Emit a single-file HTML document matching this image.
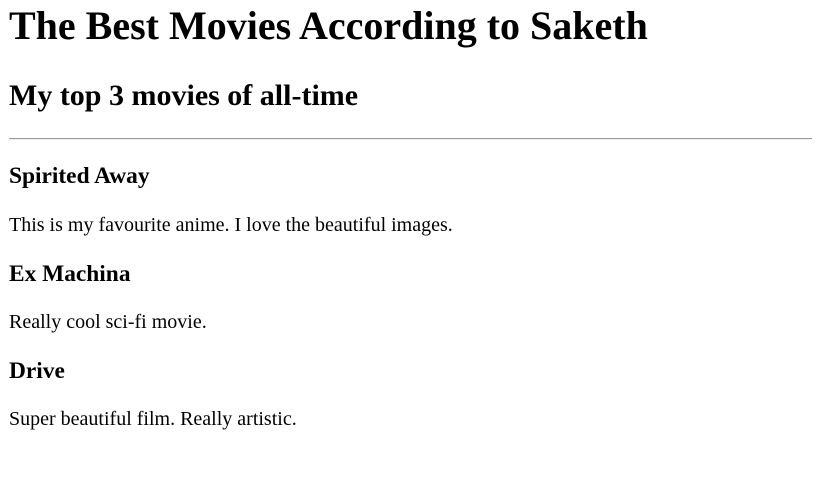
<!DOCTYPE html>
<html><head><style>
html,body{margin:0;padding:0;background:#fff;}
body{padding:0 10px 0 9px;font-family:"Liberation Serif",serif;font-size:20px;color:#000;}
h1{font-size:40px;margin:3px 0 29.5px;line-height:46px;}
h2{font-size:30px;margin:24.9px 0;line-height:34.5px;}
h3{font-size:23.4px;margin:23.6px 0;line-height:27px;}
p{margin:20px 0;line-height:23px;}
hr{border:0;border-top:1px solid #9a9a9a;border-bottom:1px solid #eee;margin:10px 0;height:0;}
</style></head><body>
<h1>The Best Movies According to Saketh</h1>
<h2>My top 3 movies of all-time</h2>
<hr>
<h3>Spirited Away</h3>
<p>This is my favourite anime. I love the beautiful images.</p>
<h3>Ex Machina</h3>
<p>Really cool sci-fi movie.</p>
<h3>Drive</h3>
<p>Super beautiful film. Really artistic.</p>
</body></html>
